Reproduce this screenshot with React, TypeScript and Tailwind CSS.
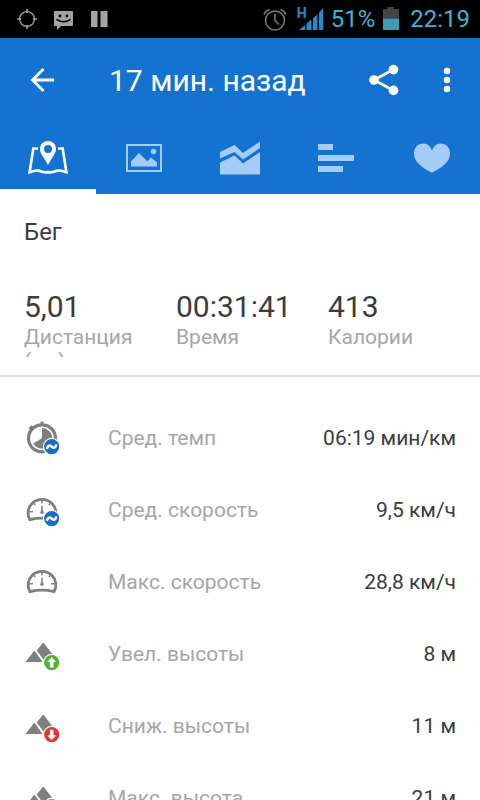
import React from 'react';

type BadgeKind = 'average' | 'up' | 'down';
type MetricIcon = 'stopwatch' | 'gauge' | 'mountain';

interface Metric {
  label: string;
  value: string;
  icon: MetricIcon;
  badge?: BadgeKind;
}

const metrics: Metric[] = [
  { label: 'Сред. темп', value: '06:19 мин/км', icon: 'stopwatch', badge: 'average' },
  { label: 'Сред. скорость', value: '9,5 км/ч', icon: 'gauge', badge: 'average' },
  { label: 'Макс. скорость', value: '28,8 км/ч', icon: 'gauge' },
  { label: 'Увел. высоты', value: '8 м', icon: 'mountain', badge: 'up' },
  { label: 'Сниж. высоты', value: '11 м', icon: 'mountain', badge: 'down' },
  { label: 'Макс. высота', value: '21 м', icon: 'mountain', badge: 'up' },
];

const summary = [
  { value: '5,01', label: 'Дистанция (км)' },
  { value: '00:31:41', label: 'Время' },
  { value: '413', label: 'Калории' },
];

/* Tab icons, 48x36 */

function MapIcon() {
  return (
    <svg className="h-9 w-12" viewBox="0 0 48 36" fill="none">
      <path
        d="M14 8.500H9.300L5.600 32.200C10.500 30.400 14 30 17.500 31.500c2.500 1 4 1.500 6.500.5 2.500 1 4 .5 6.500-.5 3.500-1.500 7-1.100 11.900.7L38.700 8.500H34"
        stroke="currentColor"
        strokeWidth="2.600"
      />
      <path
        fill="currentColor"
        fillRule="evenodd"
        d="M24 1c-4.500 0-8 3.300-8 7.800C16 14 20.500 18 24 25c3.500-7 8-11 8-16.200C32 4.300 28.500 1 24 1Zm0 4a4 4 0 1 1 0 8 4 4 0 0 1 0-8Z"
      />
    </svg>
  );
}

function PhotoIcon() {
  return (
    <svg className="h-9 w-12" viewBox="0 0 48 36" fill="currentColor">
      <rect x="7" y="5" width="34" height="26" fill="none" stroke="currentColor" strokeWidth="2" />
      <path d="M11 26.500v-5l8-8.500 8.300 8.300 3.700-3.800 6 5v4z" />
      <circle cx="33.500" cy="11.500" r="2.700" />
    </svg>
  );
}

function ChartIcon() {
  return (
    <svg className="h-9 w-12" viewBox="0 0 48 36" fill="currentColor">
      <path d="M4 12 18.500 5l8.500 8L44 1.500V8L27 19.500l-8.500-7.500L4 18.500z" />
      <path d="M4 22.500 18.500 15.500l8.500 8L44 12v22.500H4z" />
    </svg>
  );
}

function BarsIcon() {
  return (
    <svg className="h-9 w-12" viewBox="0 0 48 36" fill="currentColor">
      <path d="M6 4h15v6H6zM6 15h36v6H6zM6 26h25v6H6z" />
    </svg>
  );
}

function HeartIcon() {
  return (
    <svg className="h-9 w-12" viewBox="0 0 48 36" fill="currentColor">
      <path d="M24 32.800C21 31 6 24.500 6 13.500 6 7.800 9.800 3.500 15 3.500c4.500 0 7.800 2.800 9 7.500 1.200-4.700 4.500-7.500 9-7.500 5.200 0 9 4.300 9 10C42 24.500 27 31 24 32.800Z" />
    </svg>
  );
}

const tabs = [
  { name: 'Карта', icon: <MapIcon /> },
  { name: 'Фото', icon: <PhotoIcon /> },
  { name: 'График', icon: <ChartIcon /> },
  { name: 'Отрезки', icon: <BarsIcon /> },
  { name: 'Пульс', icon: <HeartIcon /> },
];

/* Metric icons, 36x36 */

function Badge({ kind }: { kind: BadgeKind }) {
  return (
    <g transform="translate(27.700 26.600)">
      <circle r="8.800" fill="#fefefe" />
      {kind === 'average' && (
        <>
          <circle r="7.600" fill="#146fca" />
          <path d="M-4.500 1.200C-3.500-1.600-1.500-1.700 0 0s3.500 1.600 4.500-1.200" fill="none" stroke="#fff" strokeWidth="2.600" strokeLinecap="round" />
        </>
      )}
      {kind === 'up' && (
        <>
          <circle r="7.600" fill="#4fb52f" />
          <path d="M0-5.400 4.500-.6H1.800v5.400h-3.600V-.6h-2.700z" fill="#fff" />
        </>
      )}
      {kind === 'down' && (
        <>
          <circle r="7.600" fill="#e2382f" />
          <path d="M0 5.400 4.500.6H1.800v-5.400h-3.600V.6h-2.700z" fill="#fff" />
        </>
      )}
    </g>
  );
}

function MetricGlyph({ icon, badge }: { icon: MetricIcon; badge?: BadgeKind }) {
  return (
    <svg className="h-9 w-9 shrink-0 text-[#7f7f7f]" viewBox="0 0 36 36" fill="currentColor">
      {icon === 'stopwatch' && (
        <>
          <circle cx="18" cy="18.300" r="13.500" fill="none" stroke="currentColor" strokeWidth="3.200" />
          <path d="M16.600 1.500h2.800v3.500h-2.800z" />
          <path d="m5.600 8.300 1.900-2 2 2-2 2z" stroke="currentColor" strokeWidth="1.500" />
          <path d="M18 18.300V8A10.300 10.300 0 1 1 9.100 23.400z" />
        </>
      )}
      {icon === 'gauge' && (
        <>
          <path
            d="M5.900 27.600C2.800 22.500 3.800 15.500 8 11.400c5.500-5.500 14.500-5.500 20 0 4.200 4.100 5.200 11.100 2.100 16.200-8-1.900-16.200-1.900-24.200 0Z"
            fill="none"
            stroke="currentColor"
            strokeWidth="2.800"
          />
          <path d="M18 7.500v3.800M9.800 11.500l1.400 1.400M26.200 11.500l-1.400 1.400M5.500 19.700H9M27 19.700h3.500" stroke="currentColor" strokeWidth="1.600" />
          <path d="M17.400 13.500h1.200l.4 7h-2z" />
          <circle cx="18" cy="20.300" r="1.700" />
        </>
      )}
      {icon === 'mountain' && (
        <>
          <path d="M1.500 26 9.400 15.700q1-1.200 2 0L18.500 26z" />
          <path d="M12.800 14.500 18.300 7.400q1-1.300 2 0l8.700 11.600-3 7h-4.600L14 16.300q-.7-.8-1.200-1.800z" />
        </>
      )}
      {badge && <Badge kind={badge} />}
    </svg>
  );
}

function StatusBar() {
  return (
    <div className="flex h-[38px] shrink-0 items-center bg-black pr-2.5 pl-4 text-2xl text-[#41b1dc]">
      <div className="flex flex-1 items-center gap-4 text-[#a3a3a3]">
        <svg className="h-6 w-[22px]" viewBox="0 0 22 24" fill="none" stroke="currentColor">
          <circle cx="11" cy="12" r="7.400" strokeWidth="1.300" />
          <path d="M11 2v4M11 18v4M1 12h4M17 12h4" strokeWidth="1.600" />
        </svg>
        <svg className="h-6 w-5" viewBox="0 0 20 24" fill="currentColor">
          <path d="M0 4h18q1 0 1 1v13q0 1-1 1H7L3 23v-4H0q-1 0-1-1V5q0-1 1-1Z" />
          <circle cx="6" cy="9" r="1.400" fill="#000" />
          <circle cx="13" cy="9" r="1.400" fill="#000" />
          <path d="M2.500 12.300q7 5 14 0" stroke="#000" strokeWidth="1.500" fill="none" />
        </svg>
        <svg className="h-6 w-5" viewBox="0 0 20 24" fill="currentColor">
          <path d="M1 4h6.500v16H1zM10.500 4h7v16h-7z" />
        </svg>
      </div>
      <svg className="h-6 w-6 text-[#777]" viewBox="0 0 24 24" fill="none" stroke="currentColor">
        <circle cx="12" cy="13.500" r="9.500" strokeWidth="1.600" />
        <path d="M12 7v6.500l4 4" strokeWidth="1.600" />
        <path d="M1 7.500Q2.500 4 6.500 2.500M23 7.500Q21.500 4 17.500 2.500" strokeWidth="1.800" />
      </svg>
      <div className="relative ml-3 h-6 w-6">
        <svg className="h-6 w-6" viewBox="0 0 24 24" fill="#1c8fd0">
          <path d="M0 23 6 18v5zM7.500 16.500l5-4V23h-5zM14 11l4.500-3.500V23H14zM20 6l4-5v22h-4z" />
        </svg>
        <span className="absolute -top-0.5 -left-0.5 text-sm leading-4 font-bold text-[#1c8fd0]">H</span>
      </div>
      <span className="ml-2">51%</span>
      <svg className="ml-2 h-6 w-4" viewBox="0 0 16 24">
        <path d="M4.500 0h6.500v2H16v9.500H0V2h4.500z" fill="#444" />
        <path d="M0 11.500h16V23H0z" fill="#3c9ab9" />
      </svg>
      <time className="ml-[11px]">22:19</time>
    </div>
  );
}

function Header() {
  return (
    <header className="shrink-0 bg-[#1473d1] text-white">
      <div className="flex h-[84px] items-center pr-2 pl-[18px]">
        <button type="button" aria-label="Назад" className="flex size-12 items-center justify-center">
          <svg className="size-7" viewBox="0 0 28 28" fill="none" stroke="currentColor" strokeWidth="2.800">
            <path d="M26 14H4M15.500 3 4.500 14l11 11" />
          </svg>
        </button>
        <h1 className="ml-[43px] flex-1 truncate pt-0.5 text-3xl">17 мин. назад</h1>
        <button type="button" aria-label="Поделиться" className="flex size-12 items-center justify-center">
          <svg className="size-8" viewBox="0 0 32 32" fill="currentColor">
            <path d="M25.500 5.500 6 16l19.500 10.500" fill="none" stroke="currentColor" strokeWidth="2.800" />
            <circle cx="25.500" cy="5.600" r="4.800" />
            <circle cx="6" cy="16" r="4.800" />
            <circle cx="25.500" cy="26.400" r="4.800" />
          </svg>
        </button>
        <button type="button" aria-label="Ещё" className="ml-4 flex size-12 items-center justify-center">
          <svg className="size-8" viewBox="0 0 32 32" fill="currentColor">
            <circle cx="15" cy="7" r="3.200" />
            <circle cx="15" cy="16" r="3.200" />
            <circle cx="15" cy="25" r="3.200" />
          </svg>
        </button>
      </div>
      <nav className="flex h-[72px]">
        {tabs.map((tab, index) => (
          <button
            key={tab.name}
            type="button"
            aria-label={tab.name}
            className={`flex flex-1 items-center justify-center border-b-[5px] pt-[5px] ${
              index === 0 ? 'border-white text-white' : 'border-transparent text-[#a3cdf6]'
            }`}
          >
            {tab.icon}
          </button>
        ))}
      </nav>
    </header>
  );
}

export default function App() {
  return (
    <div className="flex h-screen flex-col overflow-hidden bg-[#fefefe] font-['Roboto',sans-serif] text-[#3c3c3c]">
      <StatusBar />
      <Header />

      <section className="shrink-0 border-b-2 border-[#dedede] px-6 pt-[22px] pb-[18px]">
        <h2 className="text-2xl">Бег</h2>
        {/* Fixed height: a label that wraps is cut at the second line */}
        <dl className="mt-[41px] grid h-[68px] grid-cols-[152px_152px_1fr] overflow-hidden">
          {summary.map((item) => (
            <div key={item.label} className="flex flex-col-reverse justify-end">
              <dt className="w-[120px] text-[21px] leading-6 text-[#a6a6a6]">{item.label}</dt>
              <dd className="text-3xl leading-9">{item.value}</dd>
            </div>
          ))}
        </dl>
      </section>

      {/* Scrollable list of workout details */}
      <dl className="min-h-0 flex-1 overflow-y-auto pt-[25px] [scrollbar-width:none]">
        {metrics.map((metric) => (
          <div key={metric.label} className="flex h-[72px] items-center px-6 text-[21px]">
            <MetricGlyph icon={metric.icon} badge={metric.badge} />
            <dt className="ml-12 flex-1 pt-0.5 text-[#a6a6a6]">{metric.label}</dt>
            <dd className="pt-0.5">{metric.value}</dd>
          </div>
        ))}
      </dl>
    </div>
  );
}
